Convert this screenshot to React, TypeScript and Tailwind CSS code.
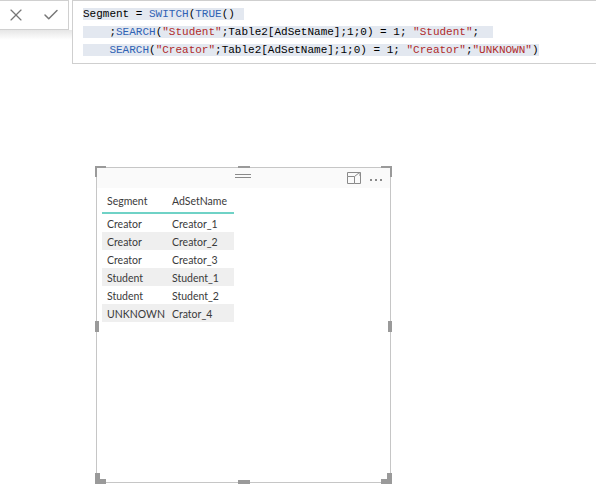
import { Check, X } from 'lucide-react';

const mono = { fontFamily: '"Liberation Mono", "DejaVu Sans Mono", monospace' };

function Kw({ children }: { children: string }) {
  return <span className="text-[#2f62b4]">{children}</span>;
}
function Str({ children }: { children: string }) {
  return <span className="text-[#b02a2a]">{children}</span>;
}

const rows = [
  ['Creator', 'Creator_1'],
  ['Creator', 'Creator_2'],
  ['Creator', 'Creator_3'],
  ['Student', 'Student_1'],
  ['Student', 'Student_2'],
  ['UNKNOWN', 'Crator_4'],
];

function Handle({ className }: { className: string }) {
  return <div className={`absolute bg-[#9a9a9a] ${className}`} />;
}

export default function App() {
  return (
    <div className="w-[596px] h-[500px] bg-white overflow-hidden relative">
      <div className="flex items-start">
        <div className="w-[72px] shrink-0">
          <div className="h-[30px] w-[69px] bg-white border-r border-b border-t border-[#d0d0d0] flex items-center gap-[16px] pl-[6px] text-[#777]">
            <X size={20} strokeWidth={1.4} />
            <Check size={18} strokeWidth={2} />
          </div>
          <div className="h-[10px] bg-gradient-to-b from-[#e6e6e6] to-white" />
        </div>
        <div
          className="flex-1 h-[64px] border border-r-0 border-[#cfcfcf] pt-[4px] pl-[10px] text-[11px] text-black leading-[18px] whitespace-pre"
          style={mono}
        >
          <div><span className="bg-[#e3e8f0] pr-[9px]">Segment = <Kw>SWITCH</Kw>(<Kw>TRUE</Kw>()</span></div>
          <div>
            <span className="bg-[#e3e8f0] pr-[14px]">
              {'    ;'}<Kw>SEARCH</Kw>(<Str>"Student"</Str>;Table2[AdSetName];1;0) = 1; <Str>"Student"</Str>;
            </span>
          </div>
          <div>
            <span className="bg-[#e3e8f0]">
              {'    '}<Kw>SEARCH</Kw>(<Str>"Creator"</Str>;Table2[AdSetName];1;0) = 1; <Str>"Creator"</Str>;<Str>"UNKNOWN"</Str>)
            </span>
          </div>
        </div>
      </div>

      <div className="ml-[96px] mt-[103px] relative w-[295px] h-[316px] border border-[#c6c6c6] bg-white">
        <Handle className="-left-[2px] -top-[2px] w-[11px] h-[5px]" />
        <Handle className="-left-[2px] -top-[2px] w-[5px] h-[11px]" />
        <Handle className="-right-[2px] -top-[2px] w-[11px] h-[5px]" />
        <Handle className="-right-[2px] -top-[2px] w-[5px] h-[11px]" />
        <Handle className="-left-[2px] -bottom-[2px] w-[11px] h-[5px]" />
        <Handle className="-left-[2px] -bottom-[2px] w-[5px] h-[11px]" />
        <Handle className="-right-[2px] -bottom-[2px] w-[11px] h-[5px]" />
        <Handle className="-right-[2px] -bottom-[2px] w-[5px] h-[11px]" />
        <Handle className="left-[141px] -top-[2px] w-[12px] h-[4px]" />
        <Handle className="left-[141px] -bottom-[2px] w-[12px] h-[4px]" />
        <Handle className="-left-[2px] top-[153px] w-[4px] h-[11px]" />
        <Handle className="-right-[2px] top-[153px] w-[4px] h-[11px]" />

        <div className="h-[20px] bg-[#fafafa] relative flex items-center justify-end gap-[10px] pr-[8px] text-[#8a8a8a]">
          <div className="absolute left-[138px] top-[6px] w-[16px] flex flex-col gap-[2px]">
            <div className="h-px bg-[#8a8a8a]" />
            <div className="h-px bg-[#8a8a8a]" />
          </div>
          <svg width="14" height="12" viewBox="0 0 14 12" fill="none" stroke="#8a8a8a" strokeWidth="1" className="-mr-[1px]">
            <path d="M0.5 4.5 V11.5 H7.5 V4.5 Z" />
            <path d="M0.5 4.5 V0.5 H13.5 V11.5 H7.5" />
            <path d="M7.5 4.5 L12.5 0.5 M9.5 0.5 H13 V4" />
          </svg>
          <div className="flex gap-[3px] mt-[3px]">
            <div className="w-[2px] h-[2px] bg-[#8a8a8a]" />
            <div className="w-[2px] h-[2px] bg-[#8a8a8a]" />
            <div className="w-[2px] h-[2px] bg-[#8a8a8a]" />
          </div>
        </div>

        <div
          className="ml-[5px] w-[132px] text-[10.5px] text-[#3a3a3a]"
          style={{ fontFamily: 'Lato, "Noto Sans", sans-serif' }}
        >
          <div className="flex h-[26px] items-center border-b-2 border-[#6fd2c6] pt-[3px]">
            <div className="w-[70px] pl-[5px]">Segment</div>
            <div>AdSetName</div>
          </div>
          {rows.map(([s, a], i) => (
            <div
              key={i}
              className={`flex h-[18px] items-center pt-[3px] ${i % 2 === 1 ? 'bg-[#efefef]' : 'bg-white'}`}
            >
              <div className="w-[70px] pl-[5px]">{s}</div>
              <div>{a}</div>
            </div>
          ))}
        </div>
      </div>
    </div>
  );
}
